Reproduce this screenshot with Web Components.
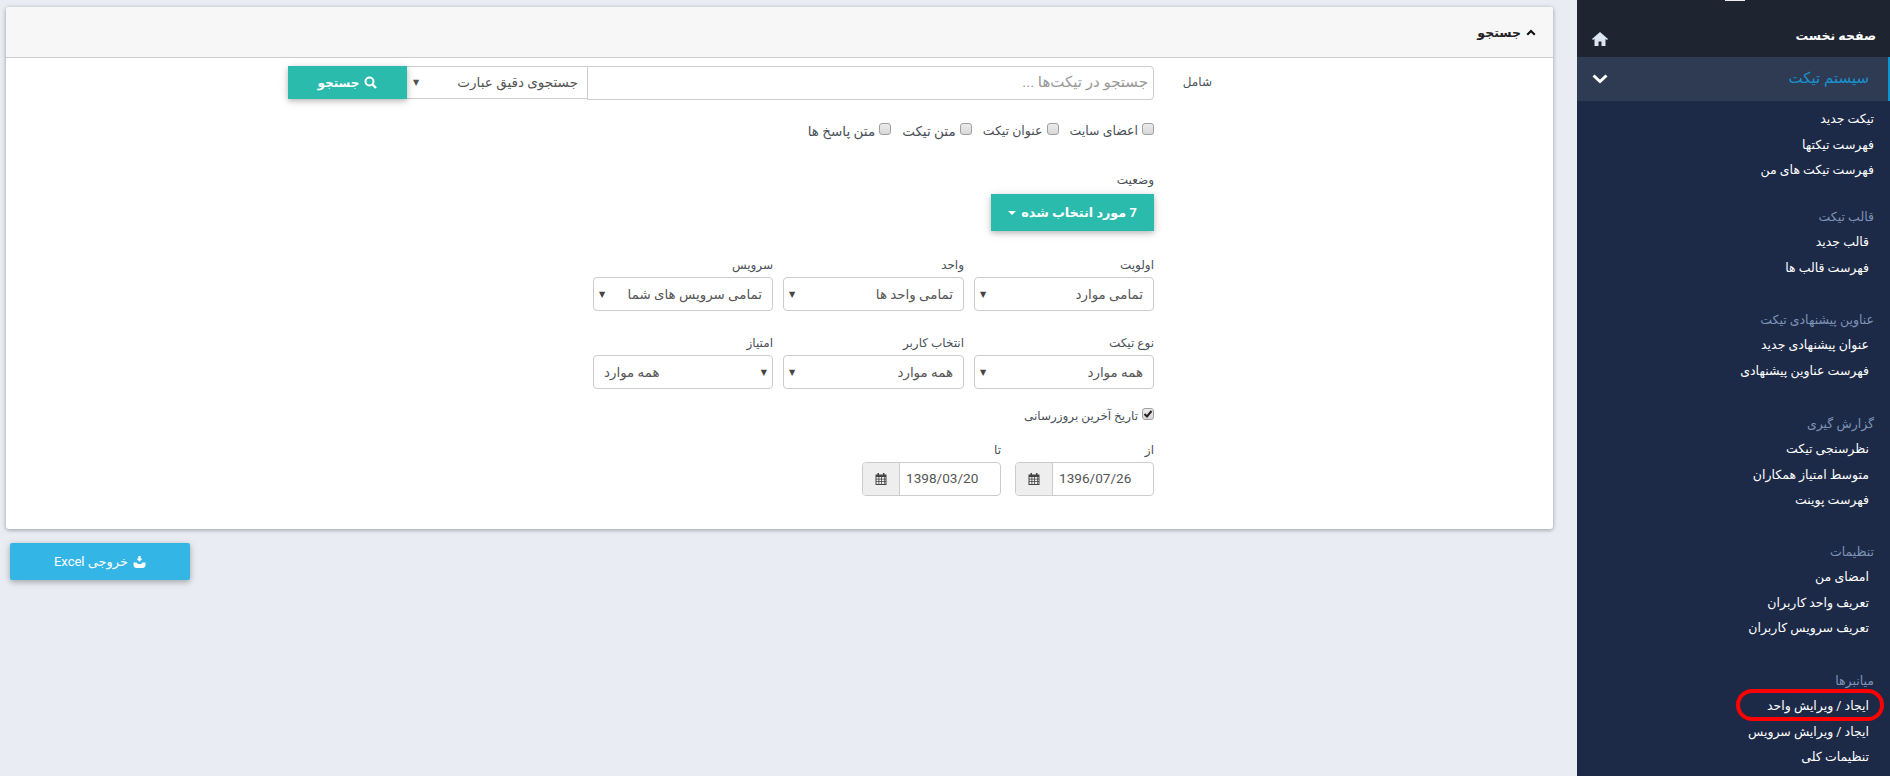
<!doctype html>
<html dir="rtl" lang="fa">
<head>
<meta charset="utf-8">
<title>جستجو</title>
<style>
  html, body { margin: 0; height: 776px; overflow: hidden; background: #e9ecf2; }
  body { display: flex; font-family: Roboto, "DejaVu Sans", sans-serif; font-size: 12px; color: #495057; }
</style>
</head>
<body>
<side-menu></side-menu>
<main-area>
  <search-panel title="جستجو">
    <search-bar></search-bar>
    <div style="display:flex;gap:11px;margin-top:22px;height:16px;font-size:12.5px">
      <check-box>اعضای سایت</check-box>
      <check-box>عنوان تیکت</check-box>
      <check-box style="font-size:13.5px">متن تیکت</check-box>
      <check-box style="font-size:13.5px">متن پاسخ ها</check-box>
    </div>
    <div style="margin-top:33px;line-height:18px">وضعیت</div>
    <teal-button style="margin-top:5px">7 مورد انتخاب شده</teal-button>
    <select-row style="margin-top:25px">
      <form-select label="اولویت" value="تمامی موارد"></form-select>
      <form-select style="width:181px" label="واحد" value="تمامی واحد ها"></form-select>
      <form-select label="سرویس" value="تمامی سرویس های شما"></form-select>
    </select-row>
    <select-row style="margin-top:23px">
      <form-select label="نوع تیکت" value="همه موارد"></form-select>
      <form-select style="width:181px" label="انتخاب کاربر" value="همه موارد"></form-select>
      <form-select label="امتیاز" value="همه موارد" flip></form-select>
    </select-row>
    <check-box checked style="margin-top:18px">تاریخ آخرین بروزرسانی</check-box>
    <div style="display:flex;gap:14px;margin-top:16px">
      <date-input label="از" value="1396/07/26"></date-input>
      <date-input label="تا" value="1398/03/20"></date-input>
    </div>
  </search-panel>
  <excel-button>خروجی Excel</excel-button>
</main-area>

<script>
  const ICONS = {
    home: '<svg width="16" height="14" viewBox="0 0 16 14"><path fill="#dce6f2" d="M8 0 16 7 15 8 13.5 7V14H9.5V9.5H6.5V14H2.5V7L1 8 0 7Z"/></svg>',
    chevron: '<svg width="16" height="10" viewBox="0 0 16 10"><path fill="none" stroke="#fff" stroke-width="3" d="M1.5 1.5 8 7.5 14.5 1.5"/></svg>',
    up: '<svg width="10" height="7" viewBox="0 0 10 7"><path fill="#111" d="M5 .5 9.5 5 8 6.5 5 3.5 2 6.5 .5 5Z"/></svg>',
    search: '<svg width="13" height="13" viewBox="0 0 13 13"><circle cx="5.5" cy="5.5" r="4" fill="none" stroke="#fff" stroke-width="2"/><path stroke="#fff" stroke-width="2.4" d="M8.5 8.5 12 12"/></svg>',
    calendar: '<svg width="12" height="12" viewBox="0 0 12 12"><path fill="#444" d="M2.5 0H4V1.5H8V0H9.5V1.5H11.5V12H.5V1.5H2.5ZM1.5 4V5.8H3.5V4ZM4.3 4V5.8H6.2V4ZM7 4V5.8H9V4ZM9.7 4V5.8H10.5V4ZM1.5 6.6V8.3H3.5V6.6ZM4.3 6.6V8.3H6.2V6.6ZM7 6.6V8.3H9V6.6ZM9.7 6.6V8.3H10.5V6.6ZM1.5 9.1V11H3.5V9.1ZM4.3 9.1V11H6.2V9.1ZM7 9.1V11H9V9.1ZM9.7 9.1V11H10.5V9.1Z" fill-rule="evenodd"/></svg>',
    download: '<svg width="13" height="12" viewBox="0 0 13 12"><path fill="#fff" d="M5.3 0H7.7V2.8H9.4L6.5 5.8 3.6 2.8H5.3ZM.5 6.5H3.5L5 8H8L9.5 6.5H12.5V9C12.5 10.8 11 12 9.5 12H3.5C2 12 .5 10.8 .5 9Z"/></svg>'
  }

  class SideMenu extends HTMLElement {
    constructor() {
      super()
      const groups = [
        { items: ['تیکت جدید', 'فهرست تیکتها', 'فهرست تیکت های من'], first: true },
        { title: 'قالب تیکت', items: ['قالب جدید', 'فهرست قالب ها'], gap: 22 },
        { title: 'عناوین پیشنهادی تیکت', items: ['عنوان پیشنهادی جدید', 'فهرست عناوین پیشنهادی'], gap: 28 },
        { title: 'گزارش گیری', items: ['نظرسنجی تیکت', 'متوسط امتیاز همکاران', 'فهرست پوینت'], gap: 28 },
        { title: 'تنظیمات', items: ['امضای من', 'تعریف واحد کاربران', 'تعریف سرویس کاربران'], gap: 27 },
        { title: 'میانبرها', items: ['ایجاد / ویرایش واحد', 'ایجاد / ویرایش سرویس', 'تنظیمات کلی'], gap: 28, ring: true }
      ]
      const html = groups.map(g => `
        <section style="margin-top:${g.first ? 5 : g.gap}px">
          ${g.title ? `<h4>${g.title}</h4>` : ''}
          ${g.items.map((t, i) => `<a class="${g.first ? 'flush' : ''}">${t}${g.ring && i === 0 ? '<i class="ring"></i>' : ''}</a>`).join('')}
        </section>`).join('')

      this.attachShadow({ mode: 'open' }).innerHTML = `
        <style>
          :host { display: block; flex: none; width: 313px; height: 776px; overflow: hidden; background: #1c2a47; color: #fff; }
          .top { position: relative; height: 57px; background: #1e2530; display: flex; justify-content: space-between; font-weight: bold; }
          .top b { margin: 26px 14px 0 0; line-height: 20px; font-size: 12.5px; }
          .top span { margin: 32px 0 0 15px; }
          .logo { position: absolute; top: 0; left: 148px; width: 20px; height: 1px; background: #eee; }
          .open { height: 44px; box-sizing: border-box; background: #2f3a53; border-right: 2px solid #0b94cf; display: flex; align-items: center; justify-content: space-between; padding: 0 19px 0 15px; color: #1593d0; font-size: 15px; }
          .open span { margin-top: -2px; }
          .open svg { display: block; }
          section { display: flex; flex-direction: column; }
          h4 { margin: 0 16px 0 0; height: 24px; line-height: 24px; font-size: 12.5px; font-weight: normal; color: #7d93b5; }
          a { position: relative; height: 25.7px; line-height: 25px; margin-right: 21px; font-size: 12.5px; color: #fff; }
          a.flush { margin-right: 16px; }
          .ring { position: absolute; right: -15px; top: -4px; width: 140px; height: 24px; border: 4px solid #f00; border-radius: 16px; }
        </style>
        <div class="top"><i class="logo"></i><b>صفحه نخست</b><span>${ICONS.home}</span></div>
        <div class="open"><span>سیستم تیکت</span>${ICONS.chevron}</div>
        ${html}`
    }
  }

  class MainArea extends HTMLElement {
    constructor() {
      super()
      this.attachShadow({ mode: 'open' }).innerHTML = `
        <style>:host { display: flex; flex-direction: column; flex: 1; padding: 7px 24px 0 0; min-width: 0; }</style>
        <slot></slot>`
    }
  }

  class SearchPanel extends HTMLElement {
    constructor() {
      super()
      this.attachShadow({ mode: 'open' }).innerHTML = `
        <style>
          :host { display: block; width: 1547px; height: 522px; background: #fff; border-radius: 3px; box-shadow: 0 1px 4px rgba(0,0,0,.35); }
          header { height: 51px; box-sizing: border-box; background: #f7f7f7; border-bottom: 1px solid #ccc; border-radius: 3px 3px 0 0; display: flex; align-items: center; gap: 5px; padding: 0 17px; font-size: 12.5px; font-weight: bold; color: #222; }
          .body { padding: 8px 399px 0 0; display: flex; flex-direction: column; align-items: flex-start; position: relative; }
        </style>
        <header>${ICONS.up}<span>${this.getAttribute('title')}</span></header>
        <div class="body"><slot></slot></div>`
    }
  }

  class SearchBar extends HTMLElement {
    constructor() {
      super()
      this.attachShadow({ mode: 'open' }).innerHTML = `
        <style>
          :host { display: flex; height: 34px; }
          .label { position: absolute; right: 341px; top: 15px; line-height: 18px; }
          .input { width: 567px; box-sizing: border-box; border: 1px solid #ccc; border-radius: 0 4px 4px 0; padding: 0 5px; line-height: 31px; color: #999; font-size: 15px; }
          .select { width: 180px; box-sizing: border-box; border: solid #ccc; border-width: 1px 0; height: 33px; display: flex; justify-content: space-between; padding: 0 9px 0 6px; line-height: 31px; color: #555; font-size: 13.5px; }
          .select i { font-style: normal; font-size: 8px; }
          button { width: 119px; height: 33px; border: 0; padding: 0; background: #2bbbad; color: #fff; font: bold 12px Roboto, "DejaVu Sans", sans-serif; box-shadow: 0 2px 5px rgba(0,0,0,.2), 0 2px 10px rgba(0,0,0,.12); display: flex; align-items: center; justify-content: center; gap: 5px; }
        </style>
        <span class="label">شامل</span>
        <div class="input">جستجو در تیکت‌ها ...</div>
        <div class="select"><span>جستجوی دقیق عبارت</span><i>▼</i></div>
        <button>${ICONS.search}<span>جستجو</span></button>`
    }
  }

  class CheckBox extends HTMLElement {
    constructor() {
      super()
      const mark = this.hasAttribute('checked') ? '<svg width="12" height="12" viewBox="0 0 12 12"><path fill="none" stroke="#222" stroke-width="2" d="M2.5 6 5 8.5 9.5 3"/></svg>' : ''
      this.attachShadow({ mode: 'open' }).innerHTML = `
        <style>
          :host { display: flex; gap: 4px; line-height: 18px; }
          .box { width: 12px; height: 12px; margin-top: 1px; flex: none; box-sizing: border-box; background: linear-gradient(#ececec, #d8d8d8); border: 1px solid #a0a0a0; border-radius: 3px; display: flex; align-items: center; justify-content: center; }
          svg { flex: none; }
        </style>
        <span class="box">${mark}</span><slot></slot>`
    }
  }

  class TealButton extends HTMLElement {
    constructor() {
      super()
      this.attachShadow({ mode: 'open' }).innerHTML = `
        <style>
          :host { display: flex; align-items: center; justify-content: center; gap: 5px; width: 163px; height: 37px; background: #2bbbad; color: #fff; font-weight: bold; font-size: 12.8px; box-shadow: 0 2px 5px rgba(0,0,0,.2), 0 2px 10px rgba(0,0,0,.12); }
          i { border: 4px solid transparent; border-top-color: #fff; border-bottom: 0; }
        </style>
        <slot></slot><i></i>`
    }
  }

  class SelectRow extends HTMLElement {
    constructor() {
      super()
      this.attachShadow({ mode: 'open' }).innerHTML = `
        <style>:host { display: flex; gap: 10px; }</style>
        <slot></slot>`
    }
  }

  class FormSelect extends HTMLElement {
    constructor() {
      super()
      const flip = this.hasAttribute('flip')
      this.attachShadow({ mode: 'open' }).innerHTML = `
        <style>
          :host { display: flex; flex-direction: column; width: 180px; }
          label { line-height: 18px; margin-bottom: 3px; }
          div { height: 34px; box-sizing: border-box; border: 1px solid #ccc; border-radius: 4px; display: flex; justify-content: space-between; align-items: center; padding: 0 10px 0 5px; color: #555; font-size: 13.4px; ${flip ? 'flex-direction: row-reverse; padding: 0 5px 0 10px;' : ''} }
          i { font-style: normal; font-size: 8px; color: #444; }
        </style>
        <label>${this.getAttribute('label')}</label>
        <div><span>${this.getAttribute('value')}</span><i>▼</i></div>`
    }
  }

  class DateInput extends HTMLElement {
    constructor() {
      super()
      this.attachShadow({ mode: 'open' }).innerHTML = `
        <style>
          :host { display: flex; flex-direction: column; width: 139px; }
          label { line-height: 18px; margin-bottom: 3px; }
          div { display: flex; height: 34px; box-sizing: border-box; border: 1px solid #ccc; border-radius: 4px; direction: ltr; overflow: hidden; }
          span { width: 36px; flex: none; background: #eee; border-right: 1px solid #ccc; display: flex; align-items: center; justify-content: center; }
          b { font-weight: normal; font-size: 13.6px; line-height: 30px; padding-left: 6px; color: #555; }
        </style>
        <label>${this.getAttribute('label')}</label>
        <div><span>${ICONS.calendar}</span><b>${this.getAttribute('value')}</b></div>`
    }
  }

  class ExcelButton extends HTMLElement {
    constructor() {
      super()
      this.attachShadow({ mode: 'open' }).innerHTML = `
        <style>
          :host { display: flex; align-items: center; justify-content: center; gap: 5px; width: 180px; height: 37px; margin: 14px auto 0 10px; background: #33b5e5; color: #fff; font-size: 13px; border-radius: 2px; box-shadow: 0 2px 5px rgba(0,0,0,.2), 0 2px 10px rgba(0,0,0,.12); }
        </style>
        <span style="display:flex">${ICONS.download}</span><slot></slot>`
    }
  }

  customElements.define('side-menu', SideMenu)
  customElements.define('main-area', MainArea)
  customElements.define('search-panel', SearchPanel)
  customElements.define('search-bar', SearchBar)
  customElements.define('check-box', CheckBox)
  customElements.define('teal-button', TealButton)
  customElements.define('select-row', SelectRow)
  customElements.define('form-select', FormSelect)
  customElements.define('date-input', DateInput)
  customElements.define('excel-button', ExcelButton)
</script>
</body>
</html>
